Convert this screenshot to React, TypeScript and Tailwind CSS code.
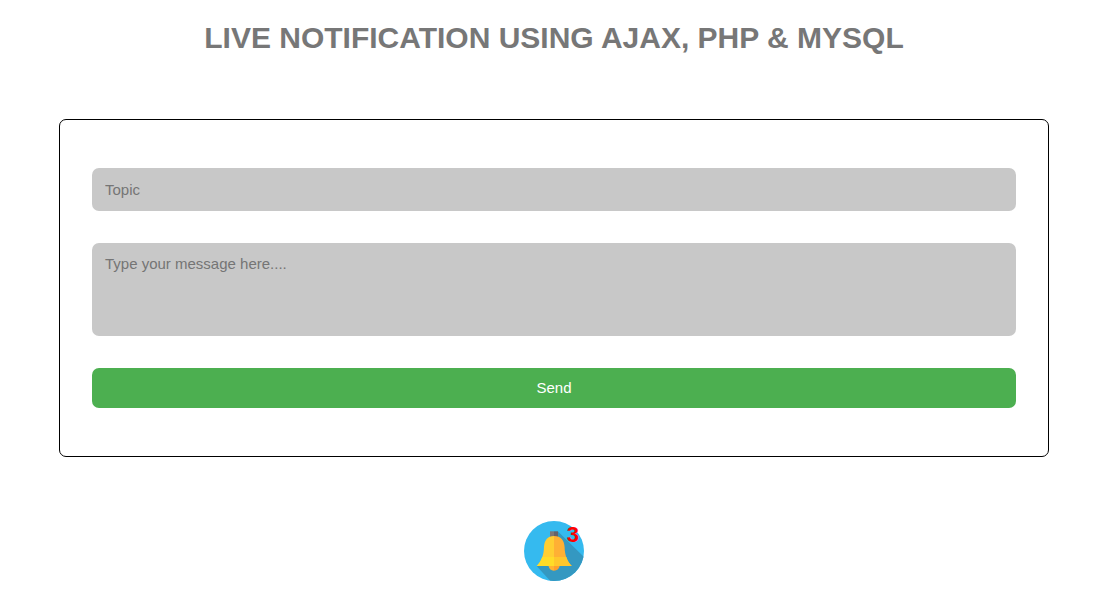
import React from "react";

function BellIcon() {
  return (
    <svg viewBox="0 0 60 60" className="block size-15" aria-hidden="true">
      <defs>
        <clipPath id="disc">
          <circle cx="30" cy="30" r="30" />
        </clipPath>
      </defs>
      <circle cx="30" cy="30" r="30" fill="#35baef" />
      <path d="M34 10.5 L64 40 V64 H30 L13 45.5 L30 30 Z" fill="#3498c1" clipPath="url(#disc)" />
      <rect x="26" y="10.3" width="4" height="6" fill="#7c7678" />
      <rect x="30" y="10.3" width="4" height="6" fill="#65626a" />
      <path d="M24.5 44 H30 V49.7 C27 49.7 24.5 47.5 24.5 44 Z" fill="#ffb332" />
      <path d="M30 44 H35.7 C35.7 47.5 33 49.7 30 49.7 Z" fill="#ff9f2c" />
      <path d="M30 15 C23.5 15 20.3 19.5 20 26 C19.8 34 17.5 40 12.7 45 H30 Z" fill="#ffce32" />
      <path d="M30 15 C37 15 40.3 19.5 40.6 26 C40.8 34 43 40 47.8 45 H30 Z" fill="#ffb034" />
      <path d="M17 39 C16 41.3 14.6 43.2 12.7 45 H30 V36 H18.2 Z" fill="#ffdc28" />
      <path d="M43.5 39 C44.5 41.3 46 43.2 47.8 45 H30 V36 H42.4 Z" fill="#ffc72c" />
    </svg>
  );
}

export default function App() {
  return (
    <main className="flex flex-col items-stretch bg-white pt-5 pr-[47px] pb-5 pl-[59px] font-['Liberation_Sans',Arial,sans-serif]">
      <h1 className="text-center text-[30px] leading-9 font-bold text-[#777777]">
        LIVE NOTIFICATION USING AJAX, PHP &amp; MYSQL
      </h1>
      <form
        className="mt-[63px] flex flex-col gap-8 rounded-[7px] border border-black px-8 py-12 text-[15px]"
        onSubmit={(event) => event.preventDefault()}
      >
        <input
          type="text"
          aria-label="Topic"
          placeholder="Topic"
          className="h-[43px] w-full rounded-[7px] bg-[#c8c8c8] px-[13px] text-black outline-none placeholder:text-[#757575]"
        />
        <textarea
          aria-label="Message"
          placeholder="Type your message here...."
          className="block h-[93px] w-full resize-none rounded-[7px] bg-[#c8c8c8] px-[13px] py-3 leading-[18px] text-black outline-none placeholder:text-[#757575]"
        />
        <button type="submit" className="h-10 w-full rounded-[7px] bg-[#4caf50] text-white">
          Send
        </button>
      </form>
      <button type="button" aria-label="3 notifications" className="relative mt-16 self-center">
        <BellIcon />
        <span className="absolute top-0.5 right-[5px] text-[22px] leading-6 font-bold text-[#ff0000]">
          3
        </span>
      </button>
    </main>
  );
}
